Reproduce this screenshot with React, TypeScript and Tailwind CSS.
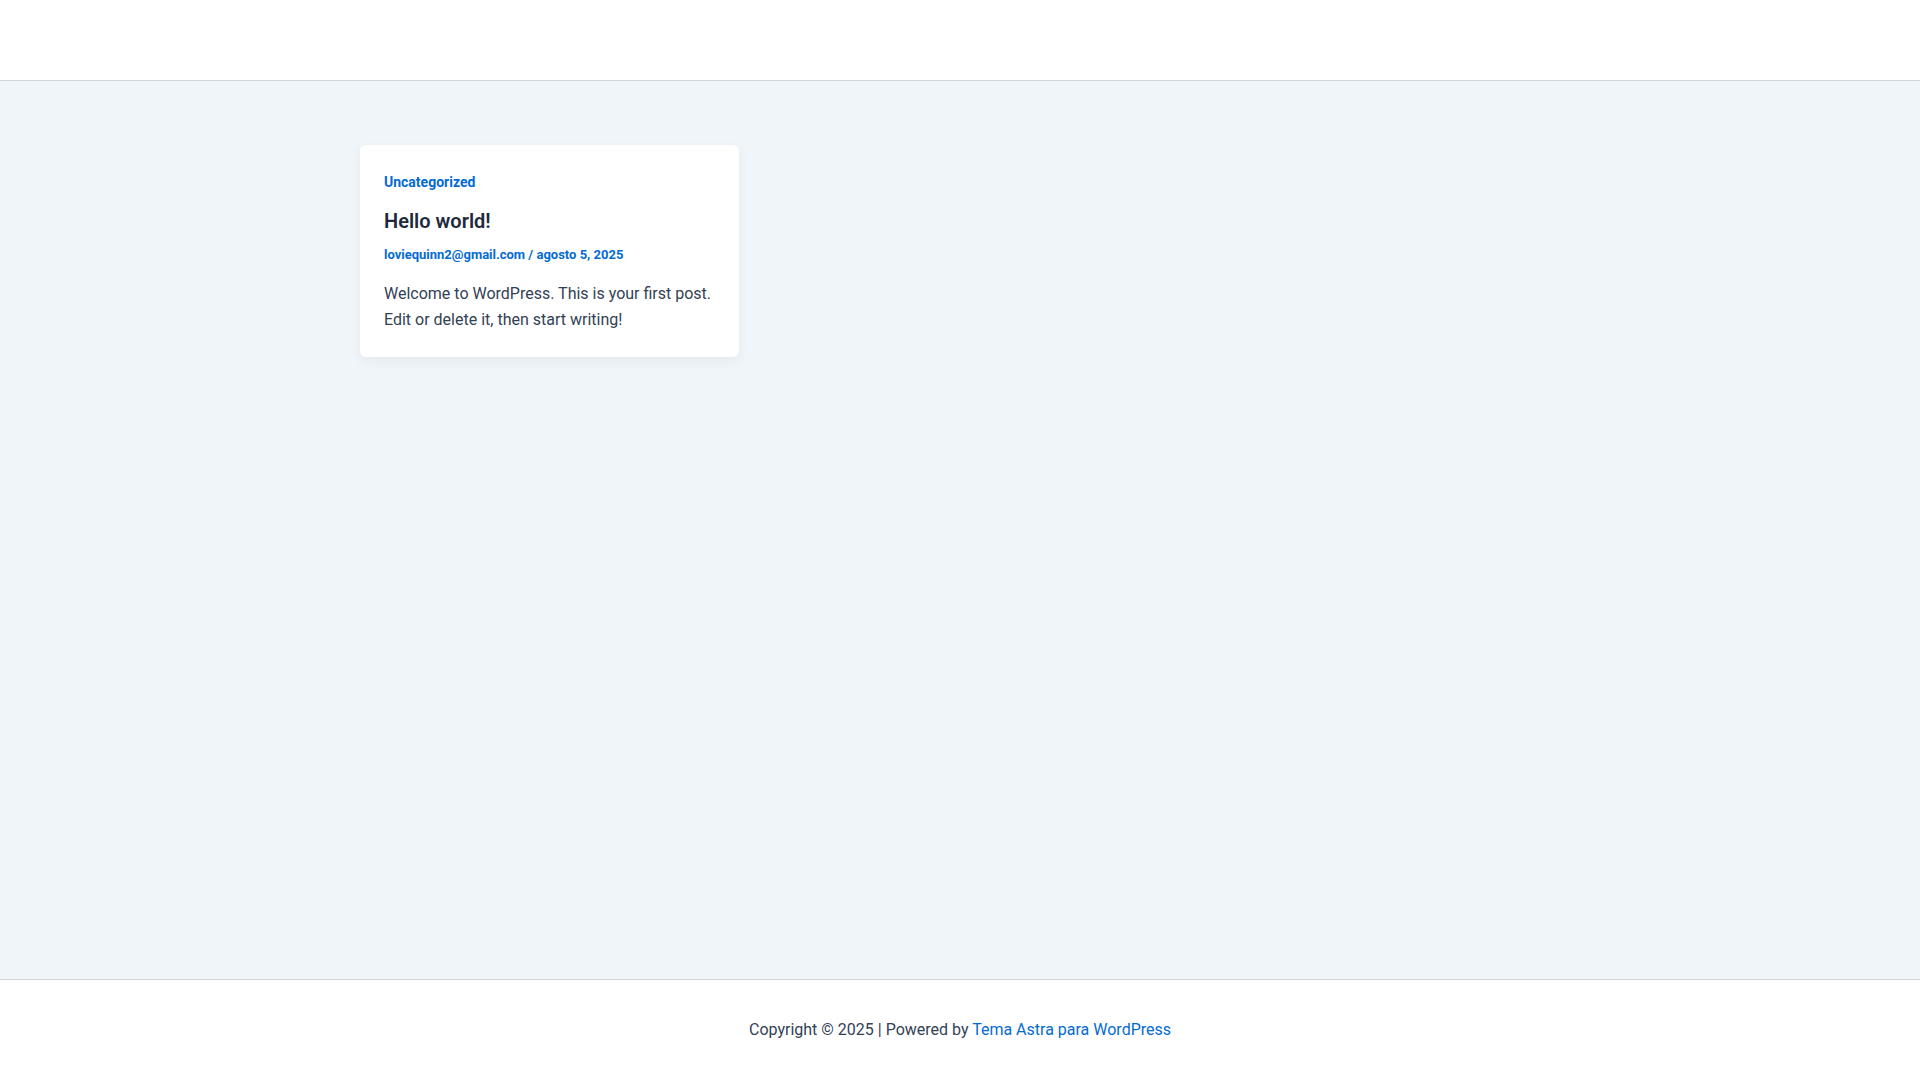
export default function App() {
  return (
    <div
      className="flex min-h-screen flex-col bg-[#f0f5fa] text-[#334155]"
      style={{ fontFamily: "Roboto, 'Liberation Sans', sans-serif" }}
    >
      <header className="h-[81px] shrink-0 border-b border-[#d1d5db] bg-white" />

      <main className="flex-1">
        <div className="mx-auto w-[1200px] pt-[64px]">
          <article className="w-[379px] rounded-md bg-white px-6 pb-[24px] pt-[27px] shadow-[0_4px_12px_rgba(15,23,42,0.05)]">
            <a href="#" className="block text-[14px] font-bold leading-[20px] text-[#046bd2]">
              Uncategorized
            </a>
            <h2 className="mt-[14px] text-[20px] font-semibold leading-[30px] text-[#1e293b]">
              <a href="#">Hello world!</a>
            </h2>
            <div className="mt-[10px] text-[13px] font-bold leading-[18px] text-[#046bd2]">
              <a href="#">loviequinn2@gmail.com</a> / <span>agosto 5, 2025</span>
            </div>
            <p className="mt-[17px] text-[16px] leading-[26px]">
              Welcome to WordPress. This is your first post. Edit or delete it, then start writing!
            </p>
          </article>
        </div>
      </main>

      <footer className="shrink-0 border-t border-[#d1d5db] bg-white pb-[37px] pt-[37px] text-center text-[16px] leading-[26px]">
        Copyright © 2025 | Powered by{" "}
        <a href="#" className="text-[#046bd2]">
          Tema Astra para WordPress
        </a>
      </footer>
    </div>
  );
}
